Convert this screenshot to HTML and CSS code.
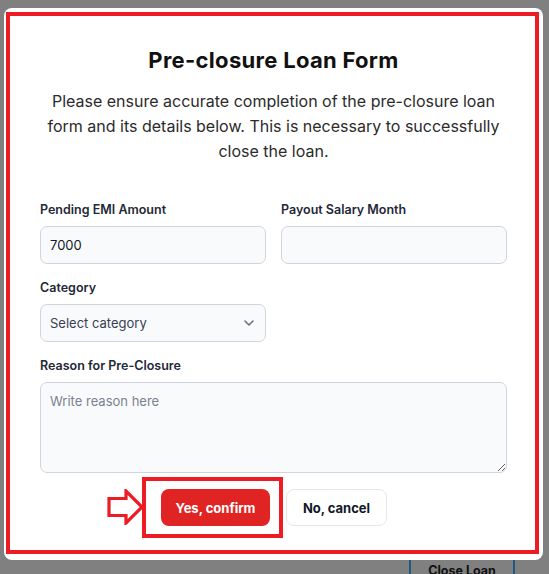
FILE: index.html
```html
<!DOCTYPE html>
<html lang="en">
<head>
<meta charset="utf-8">
<title>Pre-closure Loan Form</title>
<link rel="stylesheet" href="styles.css">
</head>
<body>
<div class="stage">
  <div class="modal">
    <div class="annot-frame"></div>
    <h1 class="title">Pre-closure Loan Form</h1>
    <p class="lead">Please ensure accurate completion of the pre-closure loan form and its details below. This is necessary to successfully close the loan.</p>
    <form class="form">
      <div class="field">
        <label class="label">Pending EMI Amount</label>
        <input class="control" type="text" value="7000">
      </div>
      <div class="field">
        <label class="label">Payout Salary Month</label>
        <input class="control" type="text" value="">
      </div>
      <div class="field">
        <label class="label">Category</label>
        <div class="control select">
          <span>Select category</span>
          <svg class="chev" width="10" height="6" viewBox="0 0 10 6"><path d="M1 1l4 4 4-4" fill="none" stroke="#6b7280" stroke-width="1.6" stroke-linecap="round" stroke-linejoin="round"/></svg>
        </div>
      </div>
      <div class="field"></div>
      <div class="field wide">
        <label class="label">Reason for Pre-Closure</label>
        <textarea class="control area" placeholder="Write reason here"></textarea>
      </div>
    </form>
    <div class="actions">
      <div class="yes-wrap">
        <svg class="annot-arrow" width="37" height="36" viewBox="0 0 37 36"><path d="M2 9.5h17V2l16 16-16 16v-7.5H2z" fill="#fff" stroke="#ed1c24" stroke-width="3.2" stroke-linejoin="miter"/></svg>
        <div class="annot-box"></div>
        <button class="btn btn-yes" type="button">Yes, confirm</button>
      </div>
      <button class="btn btn-no" type="button">No, cancel</button>
    </div>
  </div>
  <div class="behind">
    <button class="close-loan" type="button">Close Loan</button>
  </div>
</div>
</body>
</html>
```
FILE: styles.css
```css
* { box-sizing: border-box; }
html, body {
  margin: 0;
  padding: 0;
  height: 574px;
  overflow: hidden;
  background: #808080;
  font-family: "Inter", "Roboto", "Liberation Sans", sans-serif;
}
.stage {
  padding-top: 8px;
}
.modal {
  position: relative;
  z-index: 2;
  margin-left: 4px;
  width: 539px;
  height: 552px;
  background: #fff;
  border-radius: 8px;
  padding: 38px 36px 0;
}
.annot-frame {
  position: absolute;
  left: 2px;
  top: 4px;
  right: 4px;
  bottom: 6px;
  border: 4px solid #ed1c24;
  pointer-events: none;
}
.title {
  margin: 0;
  text-align: center;
  font-size: 22px;
  letter-spacing: 0.3px;
  line-height: 28px;
  font-weight: 700;
  color: #111;
}
.lead {
  margin: 15px 0 0;
  padding: 0 4px;
  text-align: center;
  font-size: 16px;
  line-height: 25px;
  color: #2b2b2b;
}
.form {
  margin-top: 36px;
  display: grid;
  grid-template-columns: 226px 226px;
  column-gap: 15px;
  row-gap: 14px;
}
.field { display: flex; flex-direction: column; }
.field.wide { grid-column: 1 / 3; }
.label {
  font-size: 12.5px;
  line-height: 20px;
  font-weight: 600;
  color: #1f2937;
  margin-bottom: 6px;
}
.control {
  height: 38px;
  border: 1px solid #d1d5db;
  border-radius: 7px;
  background: #f9fafb;
  padding: 0 9px;
  font-family: inherit;
  font-size: 13px;
  color: #111827;
  outline: none;
}
.select {
  display: flex;
  align-items: center;
  justify-content: space-between;
  color: #374151;
  padding-right: 11px;
}
.area {
  height: 91px;
  padding-top: 10px;
  resize: both;
}
.area::placeholder { color: #7b8190; }
.actions {
  margin-top: 16px;
  display: flex;
  justify-content: center;
  gap: 16px;
  padding-left: 1px;
}
.yes-wrap { position: relative; }
.annot-box {
  position: absolute;
  left: -19px;
  right: -13px;
  top: -12px;
  bottom: -12px;
  border: 4px solid #ed1c24;
  pointer-events: none;
}
.annot-arrow {
  position: absolute;
  left: -54px;
  top: 0;
}
.btn {
  height: 37px;
  border-radius: 8px;
  font-family: inherit;
  font-size: 13px;
  font-weight: 700;
  cursor: pointer;
}
.btn-yes {
  width: 109px;
  background: #e02424;
  border: none;
  color: #fff;
}
.btn-no {
  width: 101px;
  background: #fff;
  border: 1px solid #e5e7eb;
  color: #111827;
}
.behind {
  position: relative;
  z-index: 1;
  margin-top: -20px;
  padding-left: 409px;
}
.close-loan {
  width: 106px;
  height: 44px;
  padding: 19px 0 0;
  background: #808080;
  border: 2px solid #1f5a82;
  border-top: none;
  font-family: inherit;
  font-size: 12.5px;
  line-height: 16px;
  font-weight: 700;
  color: #111;
}
```
